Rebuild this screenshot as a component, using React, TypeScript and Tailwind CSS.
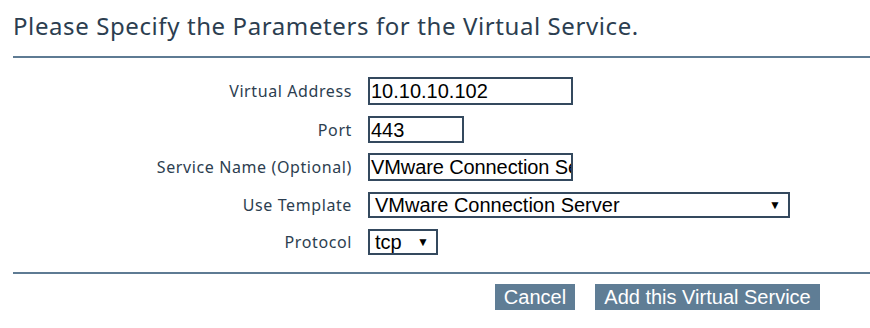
const fieldCls =
  "h-full border-2 border-[#34495e] bg-white pl-[1px] text-[20px] leading-none text-black whitespace-nowrap overflow-hidden flex items-center font-['Liberation_Sans',Arial,sans-serif]"

function Row({ label, mt, h, children }: { label: string; mt: string; h: string; children: React.ReactNode }) {
  return (
    <div className={`flex items-center gap-4 ${mt} ${h}`}>
      <div className="w-[339px] shrink-0 text-right text-[16px] tracking-[0.6px] text-[#2c3e50]">{label}</div>
      {children}
    </div>
  )
}

export default function App() {
  return (
    <div className="w-[870px] h-[328px] bg-white pl-[13px] font-['Noto_Sans',sans-serif] overflow-hidden">
      <h1 className="pt-[11px] h-[56px] text-[24px] leading-[30px] tracking-[0.6px] text-[#2c3e50]">
        Please Specify the Parameters for the Virtual Service.
      </h1>
      <div className="h-[2px] bg-[#5e7b93]" />

      <div>
        <Row label="Virtual Address" mt="mt-[19px]" h="h-[28px]">
          <div className={`${fieldCls} w-[205px]`}>10.10.10.102</div>
        </Row>
        <Row label="Port" mt="mt-[11px]" h="h-[27px]">
          <div className={`${fieldCls} w-[96px]`}>443</div>
        </Row>
        <Row label="Service Name (Optional)" mt="mt-[10px]" h="h-[28px]">
          <div className={`${fieldCls} w-[205px]`}>
            <span className="shrink-0 tracking-[-0.1px]">VMware Connection Server</span>
          </div>
        </Row>
        <Row label="Use Template" mt="mt-[11px]" h="h-[26px]">
          <div className={`${fieldCls} w-[422px] justify-between pl-[5px] pr-[7px] text-[#222]`}>
            <span>VMware Connection Server</span>
            <span className="text-[12px]">▼</span>
          </div>
        </Row>
        <Row label="Protocol" mt="mt-[11px]" h="h-[26px]">
          <div className={`${fieldCls} w-[70px] justify-between pl-[5px] pr-[7px] text-[#222]`}>
            <span>tcp</span>
            <span className="text-[12px]">▼</span>
          </div>
        </Row>
      </div>

      <div className="mt-[17px] h-[2px] bg-[#5e7b93]" />

      <div className="mt-[10px] flex gap-5 pl-[482px] font-['Liberation_Sans',Arial,sans-serif]">
        <button className="h-[26px] w-[80px] bg-[#5f7d95] text-[20px] leading-none text-white">Cancel</button>
        <button className="h-[26px] w-[225px] bg-[#5f7d95] text-[20px] leading-none text-white">
          Add this Virtual Service
        </button>
      </div>
    </div>
  )
}
